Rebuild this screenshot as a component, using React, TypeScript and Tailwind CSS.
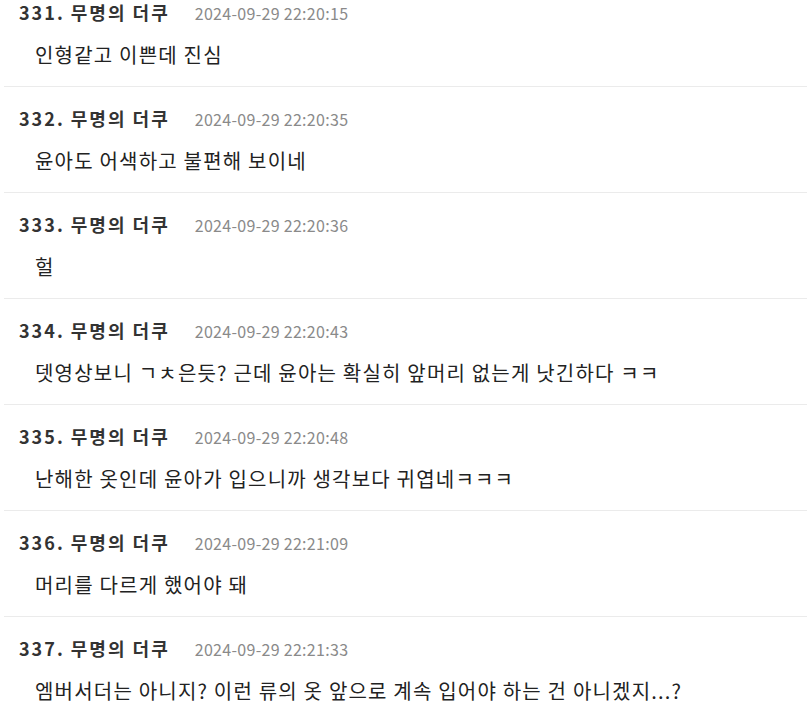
const comments = [
  { no: 331, time: "2024-09-29 22:20:15", body: "인형같고 이쁜데 진심" },
  { no: 332, time: "2024-09-29 22:20:35", body: "윤아도 어색하고 불편해 보이네" },
  { no: 333, time: "2024-09-29 22:20:36", body: "헐" },
  { no: 334, time: "2024-09-29 22:20:43", body: "뎃영상보니 ㄱㅊ은듯? 근데 윤아는 확실히 앞머리 없는게 낫긴하다 ㅋㅋ" },
  { no: 335, time: "2024-09-29 22:20:48", body: "난해한 옷인데 윤아가 입으니까 생각보다 귀엽네ㅋㅋㅋ" },
  { no: 336, time: "2024-09-29 22:21:09", body: "머리를 다르게 했어야 돼" },
  { no: 337, time: "2024-09-29 22:21:33", body: "엠버서더는 아니지? 이런 류의 옷 앞으로 계속 입어야 하는 건 아니겠지...?" },
];

export default function App() {
  return (
    <main
      className="w-[807px] h-[718px] overflow-hidden bg-white"
      style={{ fontFamily: '"Noto Sans CJK KR", "Noto Sans", sans-serif' }}
    >
      <ul className="ml-[4px]">
        {comments.map((c, i) => (
          <li
            key={c.no}
            className={`border-b border-[#ebebeb] pb-[19px] ${i === 0 ? "pt-0" : "pt-[19px]"}`}
          >
            <div className="flex items-baseline pl-[15px] h-[24px] leading-[24px]">
              <span className="text-[18px] tracking-[2px] font-bold text-[#333]">
                {c.no}. 무명의 더쿠
              </span>
              <span className="ml-[25px] text-[16px] tracking-[0.3px] text-[#8a8a8a]">
                {c.time}
              </span>
            </div>
            <p className="mt-[19px] pl-[31px] h-[24px] leading-[24px] text-[20px] tracking-[1.2px] text-[#222]">
              {c.body}
            </p>
          </li>
        ))}
      </ul>
    </main>
  );
}
